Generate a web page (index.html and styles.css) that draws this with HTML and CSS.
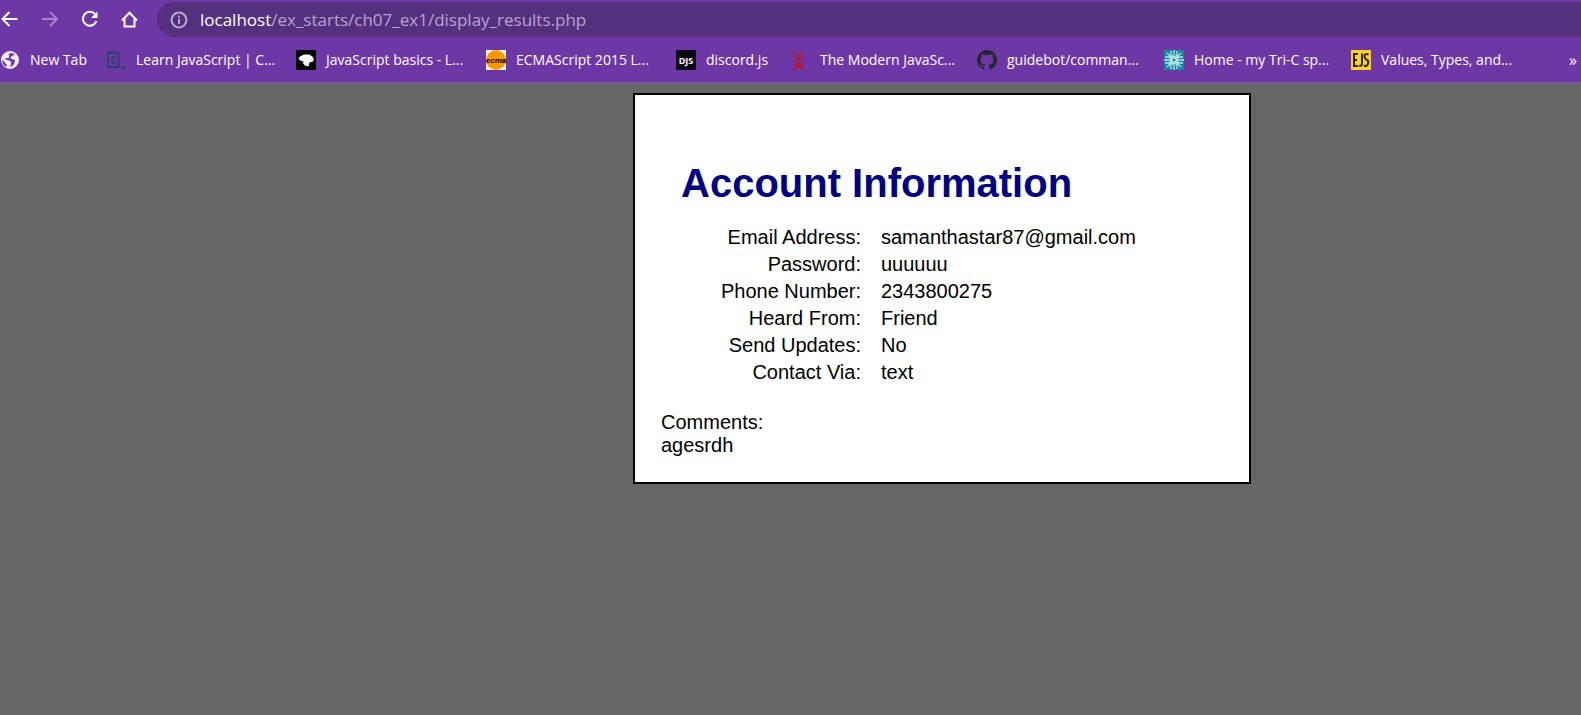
FILE: index.html
```html
<!DOCTYPE html>
<html lang="en">
<head>
<meta charset="utf-8">
<title>Account Information</title>
<link rel="stylesheet" href="styles.css">
</head>
<body>
<header class="browser">
  <div class="toolbar">
    <button class="tool" aria-label="Back"><svg viewBox="0 0 20 20"><path d="M17.500 9H3M9.500 2L2.500 9l7 7"/></svg></button>
    <button class="tool dim" aria-label="Forward"><svg viewBox="0 0 20 20"><path d="M2 9h14.500M10 2l7 7-7 7"/></svg></button>
    <button class="tool" aria-label="Reload"><svg viewBox="0 0 20 20"><path d="M15.200 4.200A7 7 0 1 0 16.500 11"/><path class="solid" d="M17.500 1.500v6.500h-6.500z"/></svg></button>
    <button class="tool" aria-label="Home"><svg viewBox="0 0 20 20"><path d="M2 10.500L9.500 2.700l7.500 7.800M4.500 9v7.500h10V9"/></svg></button>
    <div class="address">
      <svg class="info" viewBox="0 0 18 18"><circle cx="9" cy="9" r="7.400"/><path d="M9 8v5M9 4.800v1.900"/></svg>
      <a class="url" href="#"><span class="host">localhost</span>/ex_starts/ch07_ex1/display_results.php</a>
    </div>
  </div>
  <nav class="bookmarks" aria-label="Bookmarks">
    <a class="mark first" href="#"><svg viewBox="0 0 20 20"><circle cx="10" cy="10" r="9" fill="#f1edf8"/><path d="M11 3Q8 4 9 6T7 8L4 9q4 1 6 2t1 3l-1 3q3-1 4-3t1-4q-2-1-4-1-1-2 1-3t3-2zM2 10q3 2 5 5l-1 2q-4-3-4-7" fill="#6e37a6"/></svg>New Tab</a>
    <a class="mark wide" href="#"><svg viewBox="0 0 20 20"><path d="M2 2.500h10.500v14.500H2zM15 17.500h5" fill="none" stroke="#294263" stroke-width="1.800"/><path d="M10 7.700Q6 5.500 6 9.800t4 2.400" fill="none" stroke="#294263" stroke-width="1.800"/></svg>Learn JavaScript | C...</a>
    <a class="mark wide" href="#"><svg viewBox="0 0 20 20"><path d="M0 0h20v20H0z"/><path d="M2.500 8.500L4 6.500 8 4.500h5L16.500 6.500 18 9.500 17 11.500 13.500 12.500 12.500 16.500 9 15.500 7 13.500 7.500 11.500 4 10.500z" fill="#fff"/></svg>JavaScript basics - L...</a>
    <a class="mark wide" href="#"><svg viewBox="0 0 20 20"><path d="M0 0h20v20H0z" fill="#fff"/><circle cx="10" cy="10" r="10" fill="#ff9800"/><text class="ecma" x="10" y="12.500">ecma</text></svg>ECMAScript 2015 L...</a>
    <a class="mark short" href="#"><svg viewBox="0 0 20 20"><path d="M0 0h20v20H0z" fill="#090a16"/><text class="djs" x="10" y="13.500">DJS</text></svg>discord.js</a>
    <a class="mark" href="#"><svg viewBox="0 0 20 20"><path d="M6.500 7h4l1 6 2.500 6.500h-3L8.500 17 6 19.500H3.500L6 13z" fill="#b3173b"/><path d="M6.500 5.500h4M6 3l2 3M11 3L9 6M2.500 1.500l3 3M14 1.500l-3 3M1 6l4 .8M16 6l-4 .8" fill="none" stroke="#b3173b" stroke-width="1.200"/><path d="M7 10.500l3 2.500M7 15l2-1.500" stroke="#6e37a6"/></svg>The Modern JavaSc...</a>
    <a class="mark" href="#"><svg viewBox="0 0 16 16"><path fill="#24292f" d="M8 0C3.580 0 0 3.580 0 8c0 3.540 2.290 6.530 5.470 7.590.4.070.55-.17.55-.38 0-.19-.01-.82-.01-1.490-2.010.37-2.530-.49-2.690-.94-.09-.23-.48-.94-.82-1.130-.28-.15-.68-.52-.01-.53.63-.01 1.080.58 1.230.82.72 1.210 1.870.87 2.330.66.07-.52.28-.87.51-1.070-1.780-.2-3.640-.89-3.640-3.950 0-.87.31-1.590.82-2.150-.08-.2-.36-1.020.08-2.120 0 0 .67-.21 2.200.82.64-.18 1.320-.27 2-.27s1.360.09 2 .27c1.530-1.040 2.200-.82 2.200-.82.44 1.100.16 1.920.08 2.120.51.56.82 1.270.82 2.150 0 3.070-1.870 3.750-3.650 3.950.29.25.54.73.54 1.480 0 1.070-.01 1.930-.01 2.200 0 .21.15.46.55.38A8.010 8.010 0 0 0 16 8c0-4.420-3.580-8-8-8z"/></svg>guidebot/comman...</a>
    <a class="mark" href="#"><svg viewBox="0 0 20 20"><path d="M0 0h20v20H0z" fill="#15899a"/><path d="M10 0v20M0 10h20M3 3l14 14M17 3L3 17M7 1v4l3 3 3-3V1M7 19v-4l3-3 3 3v4M1 7h4l3 3-3 3H1M19 7h-4l-3 3 3 3h4" fill="none" stroke="#b9e2e6" stroke-width="1.300"/><circle cx="10" cy="10" r="1.500" fill="#15899a"/></svg>Home - my Tri-C sp...</a>
    <a class="mark" href="#"><svg viewBox="0 0 20 20"><path d="M0 0h20v20H0z" fill="#ffd21e"/><path d="M7 4H3v12h4M3 10h3M11 3.500V14q0 2-3 2M17.500 4.500Q13 3 13.500 7q.5 2 2.500 3t1 4q-1 3-4 1.500" fill="none" stroke="#2c2410" stroke-width="2"/></svg>Values, Types, and...</a>
    <button class="more" aria-label="More bookmarks">»</button>
  </nav>
</header>
<main class="page">
  <section class="card">
    <h1>Account Information</h1>
    <dl class="details">
      <dt>Email Address:</dt><dd>samanthastar87@gmail.com</dd>
      <dt>Password:</dt><dd>uuuuuu</dd>
      <dt>Phone Number:</dt><dd>2343800275</dd>
      <dt>Heard From:</dt><dd>Friend</dd>
      <dt>Send Updates:</dt><dd>No</dd>
      <dt>Contact Via:</dt><dd>text</dd>
    </dl>
    <p class="comments">Comments:<br>agesrdh</p>
  </section>
</main>
</body>
</html>
```
FILE: styles.css
```css
* { box-sizing: border-box; }
body {
  margin: 0;
  min-height: 100vh;
  background: #666;
  color: #000;
  font-family: "Liberation Sans", Arial, sans-serif;
  font-size: 20px;
  line-height: 23px;
}
button { padding: 0; border: 0; background: none; color: inherit; }
.browser {
  background: #6e37a6;
  border-bottom: 1px solid #8c5dbd;
  color: #fff;
  font-family: "Open Sans", "Noto Sans", sans-serif;
}
.toolbar { display: flex; align-items: center; gap: 20px; padding-top: 2px; }
.tool { width: 20px; height: 20px; color: #fff; }
.tool svg { display: block; fill: none; stroke: currentColor; stroke-width: 2; }
.tool .solid { fill: currentColor; stroke: none; }
.tool.dim { color: #a884cb; }
.address {
  flex: 1;
  display: flex;
  align-items: center;
  gap: 12px;
  height: 35px;
  padding-left: 13px;
  margin-left: -3px;
  border-radius: 18px 0 0 18px;
  background: #54307f;
}
.info { width: 18px; height: 18px; fill: none; stroke: #b9a9cb; stroke-width: 2; }
.url { color: #b9a3d1; font-size: 17px; text-decoration: none; white-space: nowrap; }
.host { color: #fff; }
.bookmarks { display: flex; align-items: center; height: 45px; overflow: hidden; }
.mark {
  display: flex;
  align-items: center;
  gap: 10px;
  flex: 0 0 187px;
  color: #fff;
  font-size: 14px;
  text-decoration: none;
  white-space: nowrap;
}
.mark svg { flex: none; width: 20px; height: 20px; }
.first { flex-basis: 106px; }
.wide { flex-basis: 190px; }
.short { flex-basis: 114px; }
.ecma { font: bold 8px "Liberation Sans", sans-serif; text-anchor: middle; }
.djs { font: bold 9px "Open Sans", sans-serif; text-anchor: middle; fill: #fff; }
.more { margin-left: auto; padding-right: 4px; font: 16px "Open Sans", sans-serif; }
.page { padding: 10px 0 10px 633px; }
.card {
  max-width: 618px;
  padding: 65px 26px 25px;
  border: 2px solid #000;
  background: #fff;
}
h1 { margin: 0 20px 20px; color: #000080; font-size: 40px; line-height: 46px; }
.details { display: grid; grid-template-columns: 200px 1fr; gap: 4px 20px; margin: 0; }
dt { text-align: right; }
dd { margin: 0; }
.comments { margin: 27px 0 0; }
```
